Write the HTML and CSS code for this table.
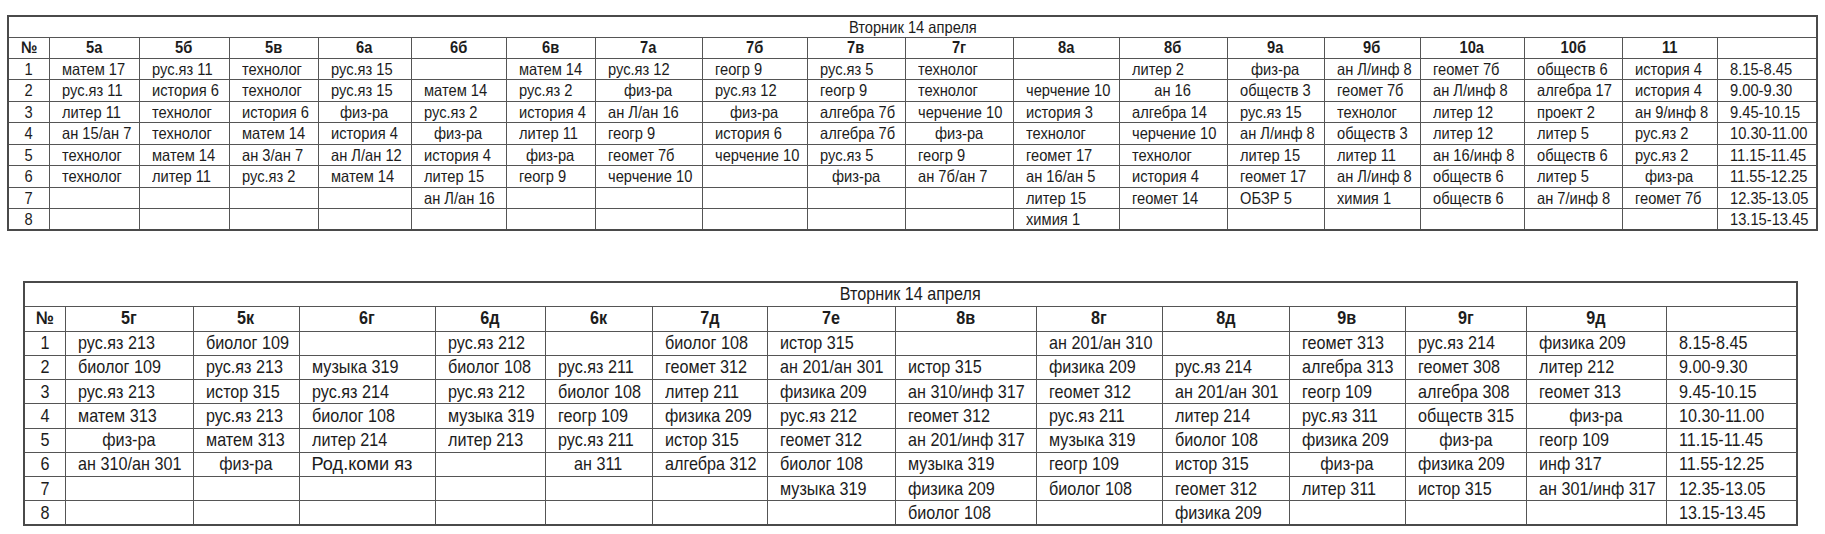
FILE: index.html
```html
<!DOCTYPE html>
<html lang="ru">
<head>
<meta charset="utf-8">
<title>Расписание</title>
<link rel="stylesheet" href="styles.css">
</head>
<body>
<div class="page">
<table class="sched t1">
<colgroup><col><col><col><col><col><col><col><col><col><col><col><col><col><col><col><col><col><col><col></colgroup>
<tr class="title"><td colspan="19"><span>Вторник 14 апреля</span></td></tr>
<tr class="head"><th><span>№</span></th><th><span>5а</span></th><th><span>5б</span></th><th><span>5в</span></th><th><span>6а</span></th><th><span>6б</span></th><th><span>6в</span></th><th><span>7а</span></th><th><span>7б</span></th><th><span>7в</span></th><th><span>7г</span></th><th><span>8а</span></th><th><span>8б</span></th><th><span>9а</span></th><th><span>9б</span></th><th><span>10а</span></th><th><span>10б</span></th><th><span>11</span></th><th></th></tr>
<tr><td class="n"><span>1</span></td><td><span>матем 17</span></td><td><span>рус.яз 11</span></td><td><span>технолог</span></td><td><span>рус.яз 15</span></td><td></td><td><span>матем 14</span></td><td><span>рус.яз 12</span></td><td><span>геогр 9</span></td><td><span>рус.яз 5</span></td><td><span>технолог</span></td><td></td><td><span>литер 2</span></td><td class="c"><span>физ-ра</span></td><td><span>ан Л/инф 8</span></td><td><span>геомет 7б</span></td><td><span>обществ 6</span></td><td><span>история 4</span></td><td><span>8.15-8.45</span></td></tr>
<tr><td class="n"><span>2</span></td><td><span>рус.яз 11</span></td><td><span>история 6</span></td><td><span>технолог</span></td><td><span>рус.яз 15</span></td><td><span>матем 14</span></td><td><span>рус.яз 2</span></td><td class="c"><span>физ-ра</span></td><td><span>рус.яз 12</span></td><td><span>геогр 9</span></td><td><span>технолог</span></td><td><span>черчение 10</span></td><td class="c"><span>ан 16</span></td><td><span>обществ 3</span></td><td><span>геомет 7б</span></td><td><span>ан Л/инф 8</span></td><td><span>алгебра 17</span></td><td><span>история 4</span></td><td><span>9.00-9.30</span></td></tr>
<tr><td class="n"><span>3</span></td><td><span>литер 11</span></td><td><span>технолог</span></td><td><span>история 6</span></td><td class="c"><span>физ-ра</span></td><td><span>рус.яз 2</span></td><td><span>история 4</span></td><td><span>ан Л/ан 16</span></td><td class="c"><span>физ-ра</span></td><td><span>алгебра 7б</span></td><td><span>черчение 10</span></td><td><span>история 3</span></td><td><span>алгебра 14</span></td><td><span>рус.яз 15</span></td><td><span>технолог</span></td><td><span>литер 12</span></td><td><span>проект 2</span></td><td><span>ан 9/инф 8</span></td><td><span>9.45-10.15</span></td></tr>
<tr><td class="n"><span>4</span></td><td><span>ан 15/ан 7</span></td><td><span>технолог</span></td><td><span>матем 14</span></td><td><span>история 4</span></td><td class="c"><span>физ-ра</span></td><td><span>литер 11</span></td><td><span>геогр 9</span></td><td><span>история 6</span></td><td><span>алгебра 7б</span></td><td class="c"><span>физ-ра</span></td><td><span>технолог</span></td><td><span>черчение 10</span></td><td><span>ан Л/инф 8</span></td><td><span>обществ 3</span></td><td><span>литер 12</span></td><td><span>литер 5</span></td><td><span>рус.яз 2</span></td><td><span>10.30-11.00</span></td></tr>
<tr><td class="n"><span>5</span></td><td><span>технолог</span></td><td><span>матем 14</span></td><td><span>ан 3/ан 7</span></td><td><span>ан Л/ан 12</span></td><td><span>история 4</span></td><td class="c"><span>физ-ра</span></td><td><span>геомет 7б</span></td><td><span>черчение 10</span></td><td><span>рус.яз 5</span></td><td><span>геогр 9</span></td><td><span>геомет 17</span></td><td><span>технолог</span></td><td><span>литер 15</span></td><td><span>литер 11</span></td><td><span>ан 16/инф 8</span></td><td><span>обществ 6</span></td><td><span>рус.яз 2</span></td><td><span>11.15-11.45</span></td></tr>
<tr><td class="n"><span>6</span></td><td><span>технолог</span></td><td><span>литер 11</span></td><td><span>рус.яз 2</span></td><td><span>матем 14</span></td><td><span>литер 15</span></td><td><span>геогр 9</span></td><td><span>черчение 10</span></td><td></td><td class="c"><span>физ-ра</span></td><td><span>ан 7б/ан 7</span></td><td><span>ан 16/ан 5</span></td><td><span>история 4</span></td><td><span>геомет 17</span></td><td><span>ан Л/инф 8</span></td><td><span>обществ 6</span></td><td><span>литер 5</span></td><td class="c"><span>физ-ра</span></td><td><span>11.55-12.25</span></td></tr>
<tr><td class="n"><span>7</span></td><td></td><td></td><td></td><td></td><td><span>ан Л/ан 16</span></td><td></td><td></td><td></td><td></td><td></td><td><span>литер 15</span></td><td><span>геомет 14</span></td><td><span>ОБЗР 5</span></td><td><span>химия 1</span></td><td><span>обществ 6</span></td><td><span>ан 7/инф 8</span></td><td><span>геомет 7б</span></td><td><span>12.35-13.05</span></td></tr>
<tr><td class="n"><span>8</span></td><td></td><td></td><td></td><td></td><td></td><td></td><td></td><td></td><td></td><td></td><td><span>химия 1</span></td><td></td><td></td><td></td><td></td><td></td><td></td><td><span>13.15-13.45</span></td></tr>
</table>

<table class="sched t2">
<colgroup><col><col><col><col><col><col><col><col><col><col><col><col><col><col><col></colgroup>
<tr class="title"><td colspan="15"><span>Вторник 14 апреля</span></td></tr>
<tr class="head"><th><span>№</span></th><th><span>5г</span></th><th><span>5к</span></th><th><span>6г</span></th><th><span>6д</span></th><th><span>6к</span></th><th><span>7д</span></th><th><span>7е</span></th><th><span>8в</span></th><th><span>8г</span></th><th><span>8д</span></th><th><span>9в</span></th><th><span>9г</span></th><th><span>9д</span></th><th></th></tr>
<tr><td class="n"><span>1</span></td><td><span>рус.яз 213</span></td><td><span>биолог 109</span></td><td></td><td><span>рус.яз 212</span></td><td></td><td><span>биолог 108</span></td><td><span>истор 315</span></td><td></td><td><span>ан 201/ан 310</span></td><td></td><td><span>геомет 313</span></td><td><span>рус.яз 214</span></td><td><span>физика 209</span></td><td><span>8.15-8.45</span></td></tr>
<tr><td class="n"><span>2</span></td><td><span>биолог 109</span></td><td><span>рус.яз 213</span></td><td><span>музыка 319</span></td><td><span>биолог 108</span></td><td><span>рус.яз 211</span></td><td><span>геомет 312</span></td><td><span>ан 201/ан 301</span></td><td><span>истор 315</span></td><td><span>физика 209</span></td><td><span>рус.яз 214</span></td><td><span>алгебра 313</span></td><td><span>геомет 308</span></td><td><span>литер 212</span></td><td><span>9.00-9.30</span></td></tr>
<tr><td class="n"><span>3</span></td><td><span>рус.яз 213</span></td><td><span>истор 315</span></td><td><span>рус.яз 214</span></td><td><span>рус.яз 212</span></td><td><span>биолог 108</span></td><td><span>литер 211</span></td><td><span>физика 209</span></td><td><span>ан 310/инф 317</span></td><td><span>геомет 312</span></td><td><span>ан 201/ан 301</span></td><td><span>геогр 109</span></td><td><span>алгебра 308</span></td><td><span>геомет 313</span></td><td><span>9.45-10.15</span></td></tr>
<tr><td class="n"><span>4</span></td><td><span>матем 313</span></td><td><span>рус.яз 213</span></td><td><span>биолог 108</span></td><td><span>музыка 319</span></td><td><span>геогр 109</span></td><td><span>физика 209</span></td><td><span>рус.яз 212</span></td><td><span>геомет 312</span></td><td><span>рус.яз 211</span></td><td><span>литер 214</span></td><td><span>рус.яз 311</span></td><td><span>обществ 315</span></td><td class="c"><span>физ-ра</span></td><td><span>10.30-11.00</span></td></tr>
<tr><td class="n"><span>5</span></td><td class="c"><span>физ-ра</span></td><td><span>матем 313</span></td><td><span>литер 214</span></td><td><span>литер 213</span></td><td><span>рус.яз 211</span></td><td><span>истор 315</span></td><td><span>геомет 312</span></td><td><span>ан 201/инф 317</span></td><td><span>музыка 319</span></td><td><span>биолог 108</span></td><td><span>физика 209</span></td><td class="c"><span>физ-ра</span></td><td><span>геогр 109</span></td><td><span>11.15-11.45</span></td></tr>
<tr><td class="n"><span>6</span></td><td><span>ан 310/ан 301</span></td><td class="c"><span>физ-ра</span></td><td class="wide"><span>Род.коми яз</span></td><td></td><td class="c"><span>ан 311</span></td><td><span>алгебра 312</span></td><td><span>биолог 108</span></td><td><span>музыка 319</span></td><td><span>геогр 109</span></td><td><span>истор 315</span></td><td class="c"><span>физ-ра</span></td><td><span>физика 209</span></td><td><span>инф 317</span></td><td><span>11.55-12.25</span></td></tr>
<tr><td class="n"><span>7</span></td><td></td><td></td><td></td><td></td><td></td><td></td><td><span>музыка 319</span></td><td><span>физика 209</span></td><td><span>биолог 108</span></td><td><span>геомет 312</span></td><td><span>литер 311</span></td><td><span>истор 315</span></td><td><span>ан 301/инф 317</span></td><td><span>12.35-13.05</span></td></tr>
<tr><td class="n"><span>8</span></td><td></td><td></td><td></td><td></td><td></td><td></td><td></td><td><span>биолог 108</span></td><td></td><td><span>физика 209</span></td><td></td><td></td><td></td><td><span>13.15-13.45</span></td></tr>
</table>
</div>
</body>
</html>
```

FILE: styles.css
```css
html, body {
  margin: 0;
  padding: 0;
  background: #ffffff;
}

.page {
  display: flex;
  flex-direction: column;
  align-items: flex-start;
}

.sched {
  border-collapse: collapse;
  table-layout: fixed;
  font-family: "Liberation Sans", Arial, sans-serif;
  color: #1c1c1c;
  border: 2px solid #4a4a4a;
}

.sched td,
.sched th {
  border: 1px solid #555555;
  padding: 0 0 0 12px;
  text-align: left;
  white-space: nowrap;
  overflow: hidden;
  font-weight: normal;
  line-height: 1;
}

/* condensed lettering, like Arial Narrow */
.sched span {
  display: inline-block;
  transform: scaleX(0.89);
  transform-origin: 0 50%;
}

.sched th {
  font-weight: bold;
  text-align: center;
  padding: 0;
}

.sched .title td,
.sched td.n,
.sched td.c {
  text-align: center;
  padding: 0;
}

.sched th span,
.sched .title span,
.sched td.n span,
.sched td.c span {
  transform-origin: 50% 50%;
}

.sched td.wide span {
  transform: none;
}

/* Table 1 */
.t1 {
  width: 1809px;
  margin: 15px 0 0 7px;
  font-size: 16.5px;
}

.t1 tr { height: 21.5px; }
.t1 .title { height: 21px; }
.t1 .head { height: 21px; }

.t1 col:nth-child(1) { width: 41px; }
.t1 col:nth-child(2) { width: 90px; }
.t1 col:nth-child(3) { width: 90px; }
.t1 col:nth-child(4) { width: 89px; }
.t1 col:nth-child(5) { width: 93px; }
.t1 col:nth-child(6) { width: 95px; }
.t1 col:nth-child(7) { width: 89px; }
.t1 col:nth-child(8) { width: 107px; }
.t1 col:nth-child(9) { width: 105px; }
.t1 col:nth-child(10) { width: 98px; }
.t1 col:nth-child(11) { width: 108px; }
.t1 col:nth-child(12) { width: 106px; }
.t1 col:nth-child(13) { width: 108px; }
.t1 col:nth-child(14) { width: 97px; }
.t1 col:nth-child(15) { width: 96px; }
.t1 col:nth-child(16) { width: 104px; }
.t1 col:nth-child(17) { width: 98px; }
.t1 col:nth-child(18) { width: 95px; }
.t1 col:nth-child(19) { width: 100px; }

/* Table 2 */
.t2 {
  width: 1773px;
  margin: 50px 0 0 23px;
  font-size: 18.2px;
}

.t2 tr { height: 24.25px; }
.t2 .title { height: 24px; }
.t2 .head { height: 25px; }

.t2 col:nth-child(1) { width: 41px; }
.t2 col:nth-child(2) { width: 128px; }
.t2 col:nth-child(3) { width: 106px; }
.t2 col:nth-child(4) { width: 136px; }
.t2 col:nth-child(5) { width: 110px; }
.t2 col:nth-child(6) { width: 107px; }
.t2 col:nth-child(7) { width: 115px; }
.t2 col:nth-child(8) { width: 128px; }
.t2 col:nth-child(9) { width: 141px; }
.t2 col:nth-child(10) { width: 126px; }
.t2 col:nth-child(11) { width: 127px; }
.t2 col:nth-child(12) { width: 116px; }
.t2 col:nth-child(13) { width: 121px; }
.t2 col:nth-child(14) { width: 140px; }
.t2 col:nth-child(15) { width: 131px; }
```
